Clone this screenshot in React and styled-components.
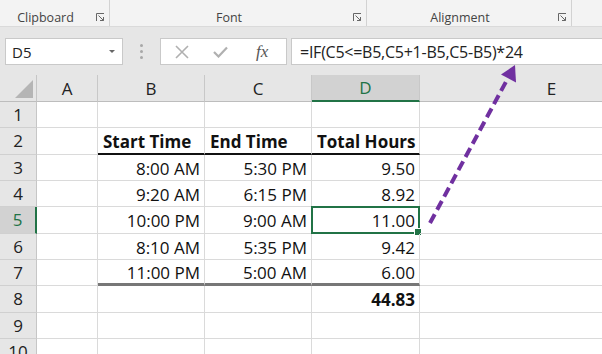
import React from 'react'
import styled, { createGlobalStyle } from 'styled-components'

const GlobalStyle = createGlobalStyle`
  html, body {
    margin: 0;
    padding: 0;
    background: #ffffff;
    overflow: hidden;
  }
  * { box-sizing: border-box; }
`

const Page = styled.div`
  position: relative;
  width: 602px;
  height: 354px;
  overflow: hidden;
  background: #e6e6e6;
  font-family: "Open Sans", "Noto Sans", sans-serif;
`

const Ribbon = styled.div`
  display: flex;
  height: 27px;
  background: #f3f3f3;
  border-bottom: 1px solid #dadada;
`

const Group = styled.div`
  display: flex;
  align-items: flex-end;
  flex: none;
  width: ${p => p.w}px;
  height: 100%;
  border-right: 1px solid #d2d2d2;
  padding-bottom: 1px;
`

const GroupLabel = styled.div`
  flex: 1;
  text-align: center;
  font-size: 12.5px;
  line-height: 15px;
  color: #444;
`

const Launcher = styled.svg`
  width: 9px;
  height: 9px;
  margin: 0 4px 3px 5px;
  flex: none;
`

const Spacer = styled.div`
  height: 11px;
`

const FormulaRow = styled.div`
  display: flex;
  align-items: center;
  height: 27px;
  padding-left: 5px;
`

const NameBox = styled.div`
  display: flex;
  align-items: center;
  justify-content: space-between;
  width: 118px;
  height: 27px;
  background: #fff;
  border: 1px solid #c9c9c9;
  padding: 0 7px 0 6px;
  font-size: 15px;
  color: #222;
`

const Caret = styled.div`
  width: 0;
  height: 0;
  border-left: 3px solid transparent;
  border-right: 3px solid transparent;
  border-top: 3px solid #666;
`

const Dots = styled.div`
  width: 37px;
  display: flex;
  flex-direction: column;
  align-items: center;
  gap: 3px;
  span {
    width: 3px;
    height: 3px;
    border-radius: 50%;
    background: #a8a8a8;
  }
`

const ButtonBox = styled.div`
  display: flex;
  align-items: center;
  width: 127px;
  height: 27px;
  background: #fff;
  border: 1px solid #c9c9c9;
`

const FxButton = styled.div`
  width: ${p => p.w}px;
  display: flex;
  justify-content: center;
  align-items: center;
  color: #a9a9a9;
`

const FxText = styled.span`
  font-family: "Liberation Serif", "DejaVu Serif", serif;
  font-style: italic;
  font-size: 17px;
  color: #555;
`

const FormulaInput = styled.div`
  flex: 1;
  height: 27px;
  margin-left: 4px;
  background: #fff;
  border: 1px solid #c9c9c9;
  border-right: none;
  padding-left: 8px;
  display: flex;
  align-items: center;
  font-size: 16px;
  letter-spacing: -0.25px;
  color: #222;
  white-space: nowrap;
`

const Sheet = styled.div`
  margin-top: 10px;
  display: grid;
  grid-template-columns: 37px 61px 107px 107px 108px 264px;
  grid-template-rows: 27px;
  grid-auto-rows: 26.33px;
  background: #fff;
`

const Corner = styled.div`
  background: #e6e6e6;
  border-right: 1px solid #c6c6c6;
  border-bottom: 1px solid #bdbdbd;
  display: flex;
  align-items: flex-end;
  justify-content: flex-end;
  padding: 0 3px 3px 0;
`

const ColHead = styled.div`
  background: ${p => (p.active ? '#d2d2d2' : '#e6e6e6')};
  color: ${p => (p.active ? '#217346' : '#222')};
  border-right: 1px solid #c8c8c8;
  border-bottom: ${p => (p.active ? '2px solid #217346' : '1px solid #bdbdbd')};
  display: flex;
  align-items: center;
  justify-content: center;
  font-size: 17px;
`

const RowHead = styled.div`
  background: ${p => (p.active ? '#d2d2d2' : '#e6e6e6')};
  color: ${p => (p.active ? '#217346' : '#222')};
  border-right: ${p => (p.active ? '2px solid #217346' : '1px solid #c6c6c6')};
  border-bottom: 1px solid #d0d0d0;
  display: flex;
  align-items: center;
  justify-content: center;
  font-size: 17px;
`

const Cell = styled.div`
  position: relative;
  border-right: 1px solid #dadada;
  border-bottom: ${p =>
    p.edge === 'head' ? '2px solid #111' : p.edge === 'total' ? '3px solid #777' : '1px solid #dadada'};
  display: flex;
  align-items: center;
  justify-content: ${p => (p.left ? 'flex-start' : 'flex-end')};
  padding: 2px 4px 0 5px;
  font-size: 17px;
  font-weight: ${p => (p.bold ? 700 : 400)};
  color: #111;
  white-space: nowrap;
`

const Selection = styled.div`
  position: absolute;
  inset: -1px -1px -1px -1px;
  border: 2px solid #217346;
  pointer-events: none;
  &::after {
    content: "";
    position: absolute;
    right: -4px;
    bottom: -4px;
    width: 6px;
    height: 6px;
    background: #217346;
    border: 1px solid #fff;
  }
`

const Arrow = styled.svg`
  position: absolute;
  left: 0;
  top: 0;
  pointer-events: none;
`

const groups = [
  { label: 'Clipboard', w: 110 },
  { label: 'Font', w: 257 },
  { label: 'Alignment', w: 205 },
]

const rows = [
  [],
  [{ t: 'Start Time', bold: true, left: true }, { t: 'End Time', bold: true, left: true }, { t: 'Total Hours', bold: true, left: true }],
  [{ t: '8:00 AM' }, { t: '5:30 PM' }, { t: '9.50' }],
  [{ t: '9:20 AM' }, { t: '6:15 PM' }, { t: '8.92' }],
  [{ t: '10:00 PM' }, { t: '9:00 AM' }, { t: '11.00' }],
  [{ t: '8:10 AM' }, { t: '5:35 PM' }, { t: '9.42' }],
  [{ t: '11:00 PM' }, { t: '5:00 AM' }, { t: '6.00' }],
  [{ t: '' }, { t: '' }, { t: '44.83', bold: true }],
  [],
  [],
]

function LauncherIcon() {
  return (
    <Launcher viewBox="0 0 9 9">
      <path d="M0.5 8V0.5H8" fill="none" stroke="#666" strokeWidth="1" />
      <path d="M2.5 2.5L7.5 7.5M4 7.5H7.5V4" fill="none" stroke="#666" strokeWidth="1" />
    </Launcher>
  )
}

export default function App() {
  return (
    <Page>
      <GlobalStyle />
      <Ribbon>
        {groups.map(g => (
          <Group key={g.label} w={g.w}>
            <GroupLabel>{g.label}</GroupLabel>
            <LauncherIcon />
          </Group>
        ))}
      </Ribbon>
      <Spacer />
      <FormulaRow>
        <NameBox>
          D5
          <Caret />
        </NameBox>
        <Dots>
          <span />
          <span />
          <span />
        </Dots>
        <ButtonBox>
          <FxButton w={42}>
            <svg width="14" height="14" viewBox="0 0 14 14">
              <path d="M1 1L13 13M13 1L1 13" stroke="#b0b0b0" strokeWidth="1.6" />
            </svg>
          </FxButton>
          <FxButton w={36}>
            <svg width="15" height="12" viewBox="0 0 15 12">
              <path d="M1 6L5.5 10.5L14 1.5" fill="none" stroke="#b0b0b0" strokeWidth="2.2" />
            </svg>
          </FxButton>
          <FxButton w={48}>
            <FxText>fx</FxText>
          </FxButton>
        </ButtonBox>
        <FormulaInput>=IF(C5&lt;=B5,C5+1-B5,C5-B5)*24</FormulaInput>
      </FormulaRow>
      <Sheet>
        <Corner>
          <svg width="18" height="18" viewBox="0 0 18 18">
            <path d="M18 0V18H0Z" fill="#b5b5b5" />
          </svg>
        </Corner>
        {['A', 'B', 'C', 'D', 'E'].map(c => (
          <ColHead key={c} active={c === 'D'}>{c}</ColHead>
        ))}
        {rows.map((r, i) => {
          const n = i + 1
          return (
            <React.Fragment key={n}>
              <RowHead active={n === 5}>{n}</RowHead>
              <Cell />
              {[0, 1, 2].map(j => {
                const c = r[j]
                return (
                  <Cell
                    key={j}
                    left={c && c.left}
                    bold={c && c.bold}
                    edge={n === 2 ? 'head' : n === 7 ? 'total' : null}
                  >
                    {c ? c.t : ''}
                    {n === 5 && j === 2 && <Selection />}
                  </Cell>
                )
              })}
              <Cell />
            </React.Fragment>
          )
        })}
      </Sheet>
      <Arrow width="602" height="354" viewBox="0 0 602 354">
        <line x1="430" y1="223" x2="508" y2="78" stroke="#7030a0" strokeWidth="4" strokeDasharray="10 5" />
        <polygon points="515,65 501,74.5 516,82.5" fill="#7030a0" />
      </Arrow>
    </Page>
  )
}
